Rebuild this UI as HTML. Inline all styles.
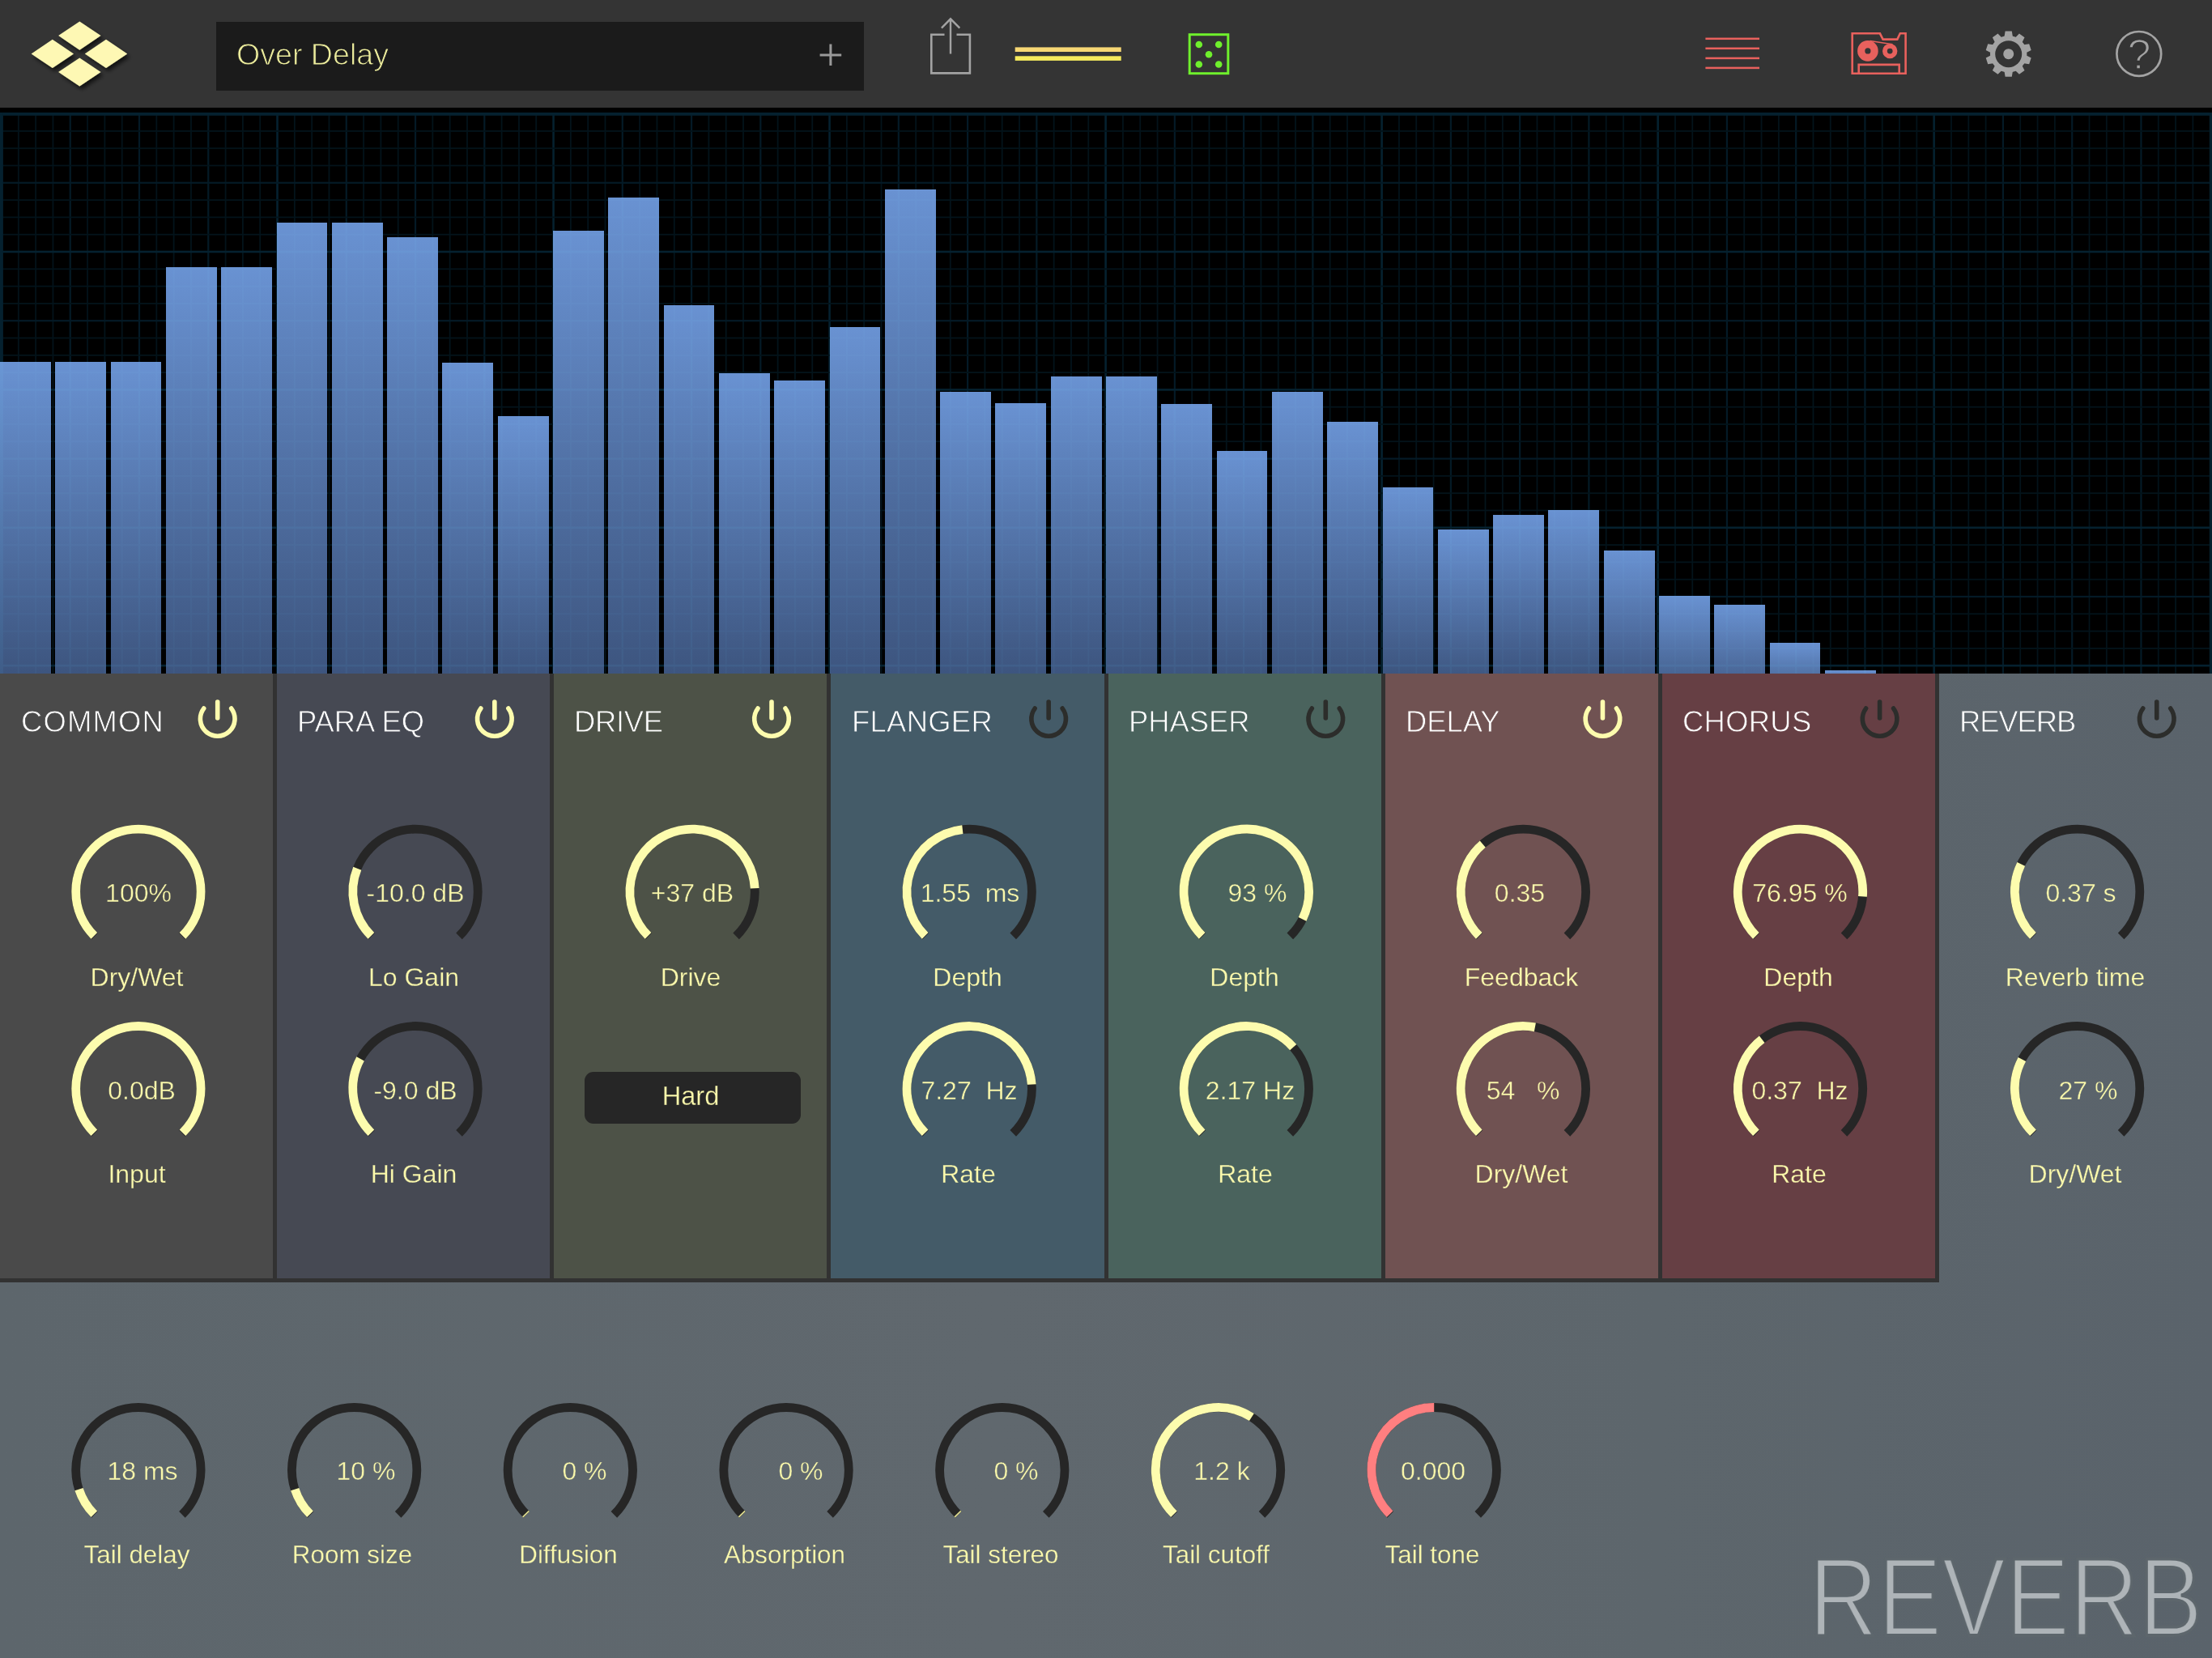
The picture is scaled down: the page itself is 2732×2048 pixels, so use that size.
<!DOCTYPE html>
<html lang="en"><head><meta charset="utf-8"><title>Reverb FX</title>
<style>
html,body{margin:0;padding:0;background:#5d666c;}
body{width:2732px;height:2048px;position:relative;overflow:hidden;font-family:"Liberation Sans", sans-serif;}
.t{position:absolute;line-height:0;white-space:pre;margin:0;padding:0;will-change:transform;}
.abs{position:absolute;}
svg{position:absolute;left:0;top:0;overflow:visible;}
.k path{fill:none;stroke-width:10.8;}

</style></head><body>
<header class="abs" style="left:0;top:0;width:2732px;height:133px;background:#343434;"></header>
<div class="abs" style="left:0;top:133px;width:2732px;height:6px;background:#000;"></div>
<svg width="200" height="133" viewBox="0 0 200 133"><defs><filter id="ds" x="-30%" y="-30%" width="170%" height="170%"><feGaussianBlur in="SourceAlpha" stdDeviation="2.4"/><feOffset dx="3" dy="4"/><feComponentTransfer><feFuncA type="linear" slope="0.65"/></feComponentTransfer><feMerge><feMergeNode/><feMergeNode in="SourceGraphic"/></feMerge></filter></defs><g filter="url(#ds)" fill="#fef8b4">
<path d="M98.3 26.5 L124.5 44.1 L98.3 61.7 L72.1 44.1Z"/>
<path d="M64.8 48.8 L91 66.4 L64.8 84 L38.6 66.4Z"/>
<path d="M131 48.8 L157.2 66.4 L131 84 L104.8 66.4Z"/>
<path d="M98.3 71.4 L124.5 89 L98.3 106.6 L72.1 89Z"/>
</g></svg>
<div class="abs" style="left:267px;top:27px;width:800px;height:85px;background:#1b1b1b;"></div>
<div class="t" style="left:291.6px;top:66.77px;font-size:37.6px;color:#eded9d;-webkit-text-stroke:1px #1b1b1b;">Over Delay</div>
<svg width="2732" height="133" viewBox="0 0 2732 133">
<path d="M1012.6 67.9H1039.2M1025.9 54.5V81.1" stroke="#999999" stroke-width="3" fill="none"/>
<path d="M1166.5 42.8H1150.3V90.4H1197.9V42.8H1181.5" stroke="#a3a3a3" stroke-width="2.6" fill="none"/>
<path d="M1174 66.5V23.5M1162.9 34.6L1174 23.3L1185.3 34.6" stroke="#a3a3a3" stroke-width="2.4" fill="none"/>
<rect x="1253.7" y="58.4" width="131" height="5.6" fill="#f7d774"/>
<rect x="1253.7" y="69.3" width="131" height="5.6" fill="#f6ea5c"/>
<rect x="1469.2" y="42.7" width="47.6" height="48" stroke="#6ff02c" stroke-width="3" fill="none"/>
<circle cx="1480.8" cy="55" r="4.3" fill="#6ff02c"/>
<circle cx="1505.2" cy="55" r="4.3" fill="#6ff02c"/>
<circle cx="1493" cy="67.2" r="4.3" fill="#6ff02c"/>
<circle cx="1480.8" cy="79.5" r="4.3" fill="#6ff02c"/>
<circle cx="1505.2" cy="79.5" r="4.3" fill="#6ff02c"/>
<rect x="2106.4" y="46.55" width="66.6" height="2.5" fill="#e8615d"/>
<rect x="2106.4" y="58.55" width="66.6" height="2.5" fill="#e8615d"/>
<rect x="2106.4" y="70.65" width="66.6" height="2.5" fill="#e8615d"/>
<rect x="2106.4" y="82.65" width="66.6" height="2.5" fill="#e8615d"/>
<path d="M2287.7 41.3H2321.9L2325.6 48.6H2343.3L2346.8 41.3H2353.6V90.8H2287.7Z" stroke="#e8615d" stroke-width="2.6" fill="none"/>
<path d="M2295.7 90.8V79.9H2345.7V90.8" stroke="#e8615d" stroke-width="2.6" fill="none"/>
<circle cx="2306.9" cy="62.9" r="8.2" stroke="#e8615d" stroke-width="9.2" fill="none"/>
<circle cx="2334.2" cy="63.1" r="6.3" stroke="#e8615d" stroke-width="5.8" fill="none"/>
<path d="M2309.5 50.6L2337.5 54.8" stroke="#e8615d" stroke-width="1.5" fill="none"/>
<path d="M2475.55 45.11 L2476.61 38.6 L2484.79 38.6 L2485.85 45.11 L2489.22 46.2 L2493.91 41.56 L2500.52 46.36 L2497.56 52.26 L2499.64 55.13 L2506.17 54.13 L2508.69 61.9 L2502.83 64.93 L2502.83 68.47 L2508.69 71.5 L2506.17 79.27 L2499.64 78.27 L2497.56 81.14 L2500.52 87.04 L2493.91 91.84 L2489.22 87.2 L2485.85 88.29 L2484.79 94.8 L2476.61 94.8 L2475.55 88.29 L2472.18 87.2 L2467.49 91.84 L2460.88 87.04 L2463.84 81.14 L2461.76 78.27 L2455.23 79.27 L2452.71 71.5 L2458.57 68.47 L2458.57 64.93 L2452.71 61.9 L2455.23 54.13 L2461.76 55.13 L2463.84 52.26 L2460.88 46.36 L2467.49 41.56 L2472.18 46.2Z" fill="#a3a3a3"/>
<circle cx="2480.7" cy="66.7" r="19.6" stroke="#a3a3a3" stroke-width="6.2" fill="none"/>
<circle cx="2480.7" cy="66.7" r="16.5" fill="#343434"/>
<circle cx="2480.7" cy="66.7" r="6.5" fill="#a3a3a3"/>
<circle cx="2641.8" cy="66.4" r="27.4" stroke="#a3a3a3" stroke-width="2.7" fill="none"/>
</svg>
<div class="t" style="left:2641.8px;top:67.38px;font-size:52px;color:#a3a3a3;transform:translateX(-50%);-webkit-text-stroke:1.5px #343434;">?</div>
<section class="abs" style="left:0;top:139px;width:2732px;height:693px;background:#000;overflow:hidden;">
<svg width="2732" height="693" viewBox="0 0 2732 693"><defs><g id="grid">
<rect x="21.91" y="0" width="1.8" height="693" fill="#03131b"/>
<rect x="43.23" y="0" width="1.8" height="693" fill="#03131b"/>
<rect x="64.54" y="0" width="1.8" height="693" fill="#03131b"/>
<rect x="85.66" y="0" width="2.2" height="693" fill="#041b27"/>
<rect x="107.17" y="0" width="1.8" height="693" fill="#03131b"/>
<rect x="128.48" y="0" width="1.8" height="693" fill="#03131b"/>
<rect x="149.8" y="0" width="1.8" height="693" fill="#03131b"/>
<rect x="170.91" y="0" width="2.2" height="693" fill="#041b27"/>
<rect x="192.43" y="0" width="1.8" height="693" fill="#03131b"/>
<rect x="213.74" y="0" width="1.8" height="693" fill="#03131b"/>
<rect x="235.05" y="0" width="1.8" height="693" fill="#03131b"/>
<rect x="256.17" y="0" width="2.2" height="693" fill="#041b27"/>
<rect x="277.68" y="0" width="1.8" height="693" fill="#03131b"/>
<rect x="299" y="0" width="1.8" height="693" fill="#03131b"/>
<rect x="320.31" y="0" width="1.8" height="693" fill="#03131b"/>
<rect x="341.22" y="0" width="2.6" height="693" fill="#052231"/>
<rect x="362.94" y="0" width="1.8" height="693" fill="#03131b"/>
<rect x="384.25" y="0" width="1.8" height="693" fill="#03131b"/>
<rect x="405.57" y="0" width="1.8" height="693" fill="#03131b"/>
<rect x="426.68" y="0" width="2.2" height="693" fill="#041b27"/>
<rect x="448.19" y="0" width="1.8" height="693" fill="#03131b"/>
<rect x="469.51" y="0" width="1.8" height="693" fill="#03131b"/>
<rect x="490.82" y="0" width="1.8" height="693" fill="#03131b"/>
<rect x="511.94" y="0" width="2.2" height="693" fill="#041b27"/>
<rect x="533.45" y="0" width="1.8" height="693" fill="#03131b"/>
<rect x="554.76" y="0" width="1.8" height="693" fill="#03131b"/>
<rect x="576.08" y="0" width="1.8" height="693" fill="#03131b"/>
<rect x="597.19" y="0" width="2.2" height="693" fill="#041b27"/>
<rect x="618.71" y="0" width="1.8" height="693" fill="#03131b"/>
<rect x="640.02" y="0" width="1.8" height="693" fill="#03131b"/>
<rect x="661.33" y="0" width="1.8" height="693" fill="#03131b"/>
<rect x="682.25" y="0" width="2.6" height="693" fill="#052231"/>
<rect x="703.96" y="0" width="1.8" height="693" fill="#03131b"/>
<rect x="725.28" y="0" width="1.8" height="693" fill="#03131b"/>
<rect x="746.59" y="0" width="1.8" height="693" fill="#03131b"/>
<rect x="767.7" y="0" width="2.2" height="693" fill="#041b27"/>
<rect x="789.22" y="0" width="1.8" height="693" fill="#03131b"/>
<rect x="810.53" y="0" width="1.8" height="693" fill="#03131b"/>
<rect x="831.85" y="0" width="1.8" height="693" fill="#03131b"/>
<rect x="852.96" y="0" width="2.2" height="693" fill="#041b27"/>
<rect x="874.47" y="0" width="1.8" height="693" fill="#03131b"/>
<rect x="895.79" y="0" width="1.8" height="693" fill="#03131b"/>
<rect x="917.1" y="0" width="1.8" height="693" fill="#03131b"/>
<rect x="938.22" y="0" width="2.2" height="693" fill="#041b27"/>
<rect x="959.73" y="0" width="1.8" height="693" fill="#03131b"/>
<rect x="981.04" y="0" width="1.8" height="693" fill="#03131b"/>
<rect x="1002.36" y="0" width="1.8" height="693" fill="#03131b"/>
<rect x="1023.27" y="0" width="2.6" height="693" fill="#052231"/>
<rect x="1044.99" y="0" width="1.8" height="693" fill="#03131b"/>
<rect x="1066.3" y="0" width="1.8" height="693" fill="#03131b"/>
<rect x="1087.61" y="0" width="1.8" height="693" fill="#03131b"/>
<rect x="1108.73" y="0" width="2.2" height="693" fill="#041b27"/>
<rect x="1130.24" y="0" width="1.8" height="693" fill="#03131b"/>
<rect x="1151.56" y="0" width="1.8" height="693" fill="#03131b"/>
<rect x="1172.87" y="0" width="1.8" height="693" fill="#03131b"/>
<rect x="1193.98" y="0" width="2.2" height="693" fill="#041b27"/>
<rect x="1215.5" y="0" width="1.8" height="693" fill="#03131b"/>
<rect x="1236.81" y="0" width="1.8" height="693" fill="#03131b"/>
<rect x="1258.13" y="0" width="1.8" height="693" fill="#03131b"/>
<rect x="1279.24" y="0" width="2.2" height="693" fill="#041b27"/>
<rect x="1300.75" y="0" width="1.8" height="693" fill="#03131b"/>
<rect x="1322.07" y="0" width="1.8" height="693" fill="#03131b"/>
<rect x="1343.38" y="0" width="1.8" height="693" fill="#03131b"/>
<rect x="1364.3" y="0" width="2.6" height="693" fill="#052231"/>
<rect x="1386.01" y="0" width="1.8" height="693" fill="#03131b"/>
<rect x="1407.32" y="0" width="1.8" height="693" fill="#03131b"/>
<rect x="1428.64" y="0" width="1.8" height="693" fill="#03131b"/>
<rect x="1449.75" y="0" width="2.2" height="693" fill="#041b27"/>
<rect x="1471.27" y="0" width="1.8" height="693" fill="#03131b"/>
<rect x="1492.58" y="0" width="1.8" height="693" fill="#03131b"/>
<rect x="1513.89" y="0" width="1.8" height="693" fill="#03131b"/>
<rect x="1535.01" y="0" width="2.2" height="693" fill="#041b27"/>
<rect x="1556.52" y="0" width="1.8" height="693" fill="#03131b"/>
<rect x="1577.84" y="0" width="1.8" height="693" fill="#03131b"/>
<rect x="1599.15" y="0" width="1.8" height="693" fill="#03131b"/>
<rect x="1620.26" y="0" width="2.2" height="693" fill="#041b27"/>
<rect x="1641.78" y="0" width="1.8" height="693" fill="#03131b"/>
<rect x="1663.09" y="0" width="1.8" height="693" fill="#03131b"/>
<rect x="1684.41" y="0" width="1.8" height="693" fill="#03131b"/>
<rect x="1705.32" y="0" width="2.6" height="693" fill="#052231"/>
<rect x="1727.03" y="0" width="1.8" height="693" fill="#03131b"/>
<rect x="1748.35" y="0" width="1.8" height="693" fill="#03131b"/>
<rect x="1769.66" y="0" width="1.8" height="693" fill="#03131b"/>
<rect x="1790.78" y="0" width="2.2" height="693" fill="#041b27"/>
<rect x="1812.29" y="0" width="1.8" height="693" fill="#03131b"/>
<rect x="1833.6" y="0" width="1.8" height="693" fill="#03131b"/>
<rect x="1854.92" y="0" width="1.8" height="693" fill="#03131b"/>
<rect x="1876.03" y="0" width="2.2" height="693" fill="#041b27"/>
<rect x="1897.55" y="0" width="1.8" height="693" fill="#03131b"/>
<rect x="1918.86" y="0" width="1.8" height="693" fill="#03131b"/>
<rect x="1940.17" y="0" width="1.8" height="693" fill="#03131b"/>
<rect x="1961.29" y="0" width="2.2" height="693" fill="#041b27"/>
<rect x="1982.8" y="0" width="1.8" height="693" fill="#03131b"/>
<rect x="2004.12" y="0" width="1.8" height="693" fill="#03131b"/>
<rect x="2025.43" y="0" width="1.8" height="693" fill="#03131b"/>
<rect x="2046.34" y="0" width="2.6" height="693" fill="#052231"/>
<rect x="2068.06" y="0" width="1.8" height="693" fill="#03131b"/>
<rect x="2089.37" y="0" width="1.8" height="693" fill="#03131b"/>
<rect x="2110.69" y="0" width="1.8" height="693" fill="#03131b"/>
<rect x="2131.8" y="0" width="2.2" height="693" fill="#041b27"/>
<rect x="2153.31" y="0" width="1.8" height="693" fill="#03131b"/>
<rect x="2174.63" y="0" width="1.8" height="693" fill="#03131b"/>
<rect x="2195.94" y="0" width="1.8" height="693" fill="#03131b"/>
<rect x="2217.06" y="0" width="2.2" height="693" fill="#041b27"/>
<rect x="2238.57" y="0" width="1.8" height="693" fill="#03131b"/>
<rect x="2259.88" y="0" width="1.8" height="693" fill="#03131b"/>
<rect x="2281.2" y="0" width="1.8" height="693" fill="#03131b"/>
<rect x="2302.31" y="0" width="2.2" height="693" fill="#041b27"/>
<rect x="2323.83" y="0" width="1.8" height="693" fill="#03131b"/>
<rect x="2345.14" y="0" width="1.8" height="693" fill="#03131b"/>
<rect x="2366.45" y="0" width="1.8" height="693" fill="#03131b"/>
<rect x="2387.37" y="0" width="2.6" height="693" fill="#052231"/>
<rect x="2409.08" y="0" width="1.8" height="693" fill="#03131b"/>
<rect x="2430.4" y="0" width="1.8" height="693" fill="#03131b"/>
<rect x="2451.71" y="0" width="1.8" height="693" fill="#03131b"/>
<rect x="2472.82" y="0" width="2.2" height="693" fill="#041b27"/>
<rect x="2494.34" y="0" width="1.8" height="693" fill="#03131b"/>
<rect x="2515.65" y="0" width="1.8" height="693" fill="#03131b"/>
<rect x="2536.97" y="0" width="1.8" height="693" fill="#03131b"/>
<rect x="2558.08" y="0" width="2.2" height="693" fill="#041b27"/>
<rect x="2579.59" y="0" width="1.8" height="693" fill="#03131b"/>
<rect x="2600.91" y="0" width="1.8" height="693" fill="#03131b"/>
<rect x="2622.22" y="0" width="1.8" height="693" fill="#03131b"/>
<rect x="2643.34" y="0" width="2.2" height="693" fill="#041b27"/>
<rect x="2664.85" y="0" width="1.8" height="693" fill="#03131b"/>
<rect x="2686.16" y="0" width="1.8" height="693" fill="#03131b"/>
<rect x="2707.48" y="0" width="1.8" height="693" fill="#03131b"/>
<rect x="0" y="22" width="2732" height="1.8" fill="#03131b"/>
<rect x="0" y="43.3" width="2732" height="1.8" fill="#03131b"/>
<rect x="0" y="64.6" width="2732" height="1.8" fill="#03131b"/>
<rect x="0" y="85.7" width="2732" height="2.2" fill="#041b27"/>
<rect x="0" y="107.2" width="2732" height="1.8" fill="#03131b"/>
<rect x="0" y="128.5" width="2732" height="1.8" fill="#03131b"/>
<rect x="0" y="149.8" width="2732" height="1.8" fill="#03131b"/>
<rect x="0" y="170.7" width="2732" height="2.6" fill="#052231"/>
<rect x="0" y="192.4" width="2732" height="1.8" fill="#03131b"/>
<rect x="0" y="213.7" width="2732" height="1.8" fill="#03131b"/>
<rect x="0" y="235" width="2732" height="1.8" fill="#03131b"/>
<rect x="0" y="256.1" width="2732" height="2.2" fill="#041b27"/>
<rect x="0" y="277.6" width="2732" height="1.8" fill="#03131b"/>
<rect x="0" y="298.9" width="2732" height="1.8" fill="#03131b"/>
<rect x="0" y="320.2" width="2732" height="1.8" fill="#03131b"/>
<rect x="0" y="341.1" width="2732" height="2.6" fill="#052231"/>
<rect x="0" y="362.8" width="2732" height="1.8" fill="#03131b"/>
<rect x="0" y="384.1" width="2732" height="1.8" fill="#03131b"/>
<rect x="0" y="405.4" width="2732" height="1.8" fill="#03131b"/>
<rect x="0" y="426.5" width="2732" height="2.2" fill="#041b27"/>
<rect x="0" y="448" width="2732" height="1.8" fill="#03131b"/>
<rect x="0" y="469.3" width="2732" height="1.8" fill="#03131b"/>
<rect x="0" y="490.6" width="2732" height="1.8" fill="#03131b"/>
<rect x="0" y="511.5" width="2732" height="2.6" fill="#052231"/>
<rect x="0" y="533.2" width="2732" height="1.8" fill="#03131b"/>
<rect x="0" y="554.5" width="2732" height="1.8" fill="#03131b"/>
<rect x="0" y="575.8" width="2732" height="1.8" fill="#03131b"/>
<rect x="0" y="596.9" width="2732" height="2.2" fill="#041b27"/>
<rect x="0" y="618.4" width="2732" height="1.8" fill="#03131b"/>
<rect x="0" y="639.7" width="2732" height="1.8" fill="#03131b"/>
<rect x="0" y="661" width="2732" height="1.8" fill="#03131b"/>
<rect x="0" y="681.9" width="2732" height="2.6" fill="#052231"/>
<rect x="0" y="0" width="2732" height="3.8" fill="#052231"/>
<rect x="0" y="0" width="3.9" height="693" fill="#052231"/>
<rect x="2728.8" y="0" width="3.2" height="693" fill="#052231"/>
</g></defs><use href="#grid" opacity="0.65"/></svg>
<i class="abs" style="left:0px;top:307.8px;width:62.9px;height:385.2px;background:linear-gradient(#6992d2,#3d557f);"></i>
<i class="abs" style="left:68.3px;top:307.8px;width:62.9px;height:385.2px;background:linear-gradient(#6992d2,#3d557f);"></i>
<i class="abs" style="left:136.6px;top:307.8px;width:62.9px;height:385.2px;background:linear-gradient(#6992d2,#3d557f);"></i>
<i class="abs" style="left:204.9px;top:191.4px;width:62.9px;height:501.6px;background:linear-gradient(#6992d2,#3d557f);"></i>
<i class="abs" style="left:273.2px;top:191.4px;width:62.9px;height:501.6px;background:linear-gradient(#6992d2,#3d557f);"></i>
<i class="abs" style="left:341.5px;top:136px;width:62.9px;height:557px;background:linear-gradient(#6992d2,#3d557f);"></i>
<i class="abs" style="left:409.8px;top:136px;width:62.9px;height:557px;background:linear-gradient(#6992d2,#3d557f);"></i>
<i class="abs" style="left:478.1px;top:154px;width:62.9px;height:539px;background:linear-gradient(#6992d2,#3d557f);"></i>
<i class="abs" style="left:546.4px;top:308.8px;width:62.9px;height:384.2px;background:linear-gradient(#6992d2,#3d557f);"></i>
<i class="abs" style="left:614.7px;top:375.2px;width:62.9px;height:317.8px;background:linear-gradient(#6992d2,#3d557f);"></i>
<i class="abs" style="left:683px;top:145.8px;width:62.9px;height:547.2px;background:linear-gradient(#6992d2,#3d557f);"></i>
<i class="abs" style="left:751.3px;top:105.3px;width:62.9px;height:587.7px;background:linear-gradient(#6992d2,#3d557f);"></i>
<i class="abs" style="left:819.6px;top:238.2px;width:62.9px;height:454.8px;background:linear-gradient(#6992d2,#3d557f);"></i>
<i class="abs" style="left:887.9px;top:322px;width:62.9px;height:371px;background:linear-gradient(#6992d2,#3d557f);"></i>
<i class="abs" style="left:956.2px;top:331px;width:62.9px;height:362px;background:linear-gradient(#6992d2,#3d557f);"></i>
<i class="abs" style="left:1024.5px;top:265.1px;width:62.9px;height:427.9px;background:linear-gradient(#6992d2,#3d557f);"></i>
<i class="abs" style="left:1092.8px;top:94.9px;width:62.9px;height:598.1px;background:linear-gradient(#6992d2,#3d557f);"></i>
<i class="abs" style="left:1161.1px;top:345.2px;width:62.9px;height:347.8px;background:linear-gradient(#6992d2,#3d557f);"></i>
<i class="abs" style="left:1229.4px;top:358.8px;width:62.9px;height:334.2px;background:linear-gradient(#6992d2,#3d557f);"></i>
<i class="abs" style="left:1297.7px;top:325.6px;width:62.9px;height:367.4px;background:linear-gradient(#6992d2,#3d557f);"></i>
<i class="abs" style="left:1366px;top:326.3px;width:62.9px;height:366.7px;background:linear-gradient(#6992d2,#3d557f);"></i>
<i class="abs" style="left:1434.3px;top:360.2px;width:62.9px;height:332.8px;background:linear-gradient(#6992d2,#3d557f);"></i>
<i class="abs" style="left:1502.6px;top:418.1px;width:62.9px;height:274.9px;background:linear-gradient(#6992d2,#3d557f);"></i>
<i class="abs" style="left:1570.9px;top:345px;width:62.9px;height:348px;background:linear-gradient(#6992d2,#3d557f);"></i>
<i class="abs" style="left:1639.2px;top:381.7px;width:62.9px;height:311.3px;background:linear-gradient(#6992d2,#3d557f);"></i>
<i class="abs" style="left:1707.5px;top:463px;width:62.9px;height:230px;background:linear-gradient(#6992d2,#3d557f);"></i>
<i class="abs" style="left:1775.8px;top:514.6px;width:62.9px;height:178.4px;background:linear-gradient(#6992d2,#3f5883);"></i>
<i class="abs" style="left:1844.1px;top:496.6px;width:62.9px;height:196.4px;background:linear-gradient(#6992d2,#3d5580);"></i>
<i class="abs" style="left:1912.4px;top:491.2px;width:62.9px;height:201.8px;background:linear-gradient(#6992d2,#3d557f);"></i>
<i class="abs" style="left:1980.7px;top:541.3px;width:62.9px;height:151.7px;background:linear-gradient(#6992d2,#425b88);"></i>
<i class="abs" style="left:2049px;top:596.9px;width:62.9px;height:96.1px;background:linear-gradient(#6992d2,#486594);"></i>
<i class="abs" style="left:2117.3px;top:607.7px;width:62.9px;height:85.3px;background:linear-gradient(#6992d2,#4a6797);"></i>
<i class="abs" style="left:2185.6px;top:654.9px;width:62.9px;height:38.1px;background:linear-gradient(#6992d2,#5273a7);"></i>
<i class="abs" style="left:2253.9px;top:689px;width:62.9px;height:4px;background:linear-gradient(#6992d2,#6085c1);"></i>
<svg width="2732" height="693" viewBox="0 0 2732 693" style="mix-blend-mode:screen;opacity:0.35;"><use href="#grid"/></svg>
</section>
<main class="abs" style="left:0;top:832px;width:2732px;height:1216px;background:linear-gradient(90deg,#5d666c 0%,#60686e 45%,#5d666c 75%,#5a636b 100%);"></main>
<div class="abs" style="left:0;top:832px;width:2395.05px;height:752px;background:#323232;"></div>
<div class="abs" style="left:0px;top:832px;width:337.15px;height:747px;background:#4a4a4a;"></div>
<div class="t" style="left:25.6px;top:892.19px;font-size:36.4px;color:#ffffff;-webkit-text-stroke:0.8px #4a4a4a;letter-spacing:1.2px;">COMMON</div>
<div class="abs" style="left:342.15px;top:832px;width:337.15px;height:747px;background:#464953;"></div>
<div class="t" style="left:367.25px;top:892.19px;font-size:36.4px;color:#ffffff;-webkit-text-stroke:0.8px #464953;">PARA EQ</div>
<div class="abs" style="left:684.3px;top:832px;width:337.15px;height:747px;background:#4d5247;"></div>
<div class="t" style="left:709.4px;top:892.19px;font-size:36.4px;color:#ffffff;-webkit-text-stroke:0.8px #4d5247;letter-spacing:-0.3px;">DRIVE</div>
<div class="abs" style="left:1026.45px;top:832px;width:337.15px;height:747px;background:#445b68;"></div>
<div class="t" style="left:1051.55px;top:892.19px;font-size:36.4px;color:#ffffff;-webkit-text-stroke:0.8px #445b68;letter-spacing:0.3px;">FLANGER</div>
<div class="abs" style="left:1368.6px;top:832px;width:337.15px;height:747px;background:#4a635d;"></div>
<div class="t" style="left:1393.7px;top:892.19px;font-size:36.4px;color:#ffffff;-webkit-text-stroke:0.8px #4a635d;">PHASER</div>
<div class="abs" style="left:1710.75px;top:832px;width:337.15px;height:747px;background:#705252;"></div>
<div class="t" style="left:1735.85px;top:892.19px;font-size:36.4px;color:#ffffff;-webkit-text-stroke:0.8px #705252;">DELAY</div>
<div class="abs" style="left:2052.9px;top:832px;width:337.15px;height:747px;background:#663f44;"></div>
<div class="t" style="left:2078px;top:892.19px;font-size:36.4px;color:#ffffff;-webkit-text-stroke:0.8px #663f44;letter-spacing:0.3px;">CHORUS</div>
<div class="t" style="left:2420.15px;top:892.19px;font-size:36.4px;color:#ffffff;-webkit-text-stroke:0.8px #5d666c;letter-spacing:-1.1px;">REVERB</div>
<svg width="2732" height="2048" viewBox="0 0 2732 2048" fill="none" stroke-linecap="round">
<path d="M285.71 875.08 A21.3 21.3 0 1 1 251.69 875.08 M268.7 867V887" stroke="#fdfcae" stroke-width="5.6"/>
<path d="M627.86 875.08 A21.3 21.3 0 1 1 593.84 875.08 M610.85 867V887" stroke="#fdfcae" stroke-width="5.6"/>
<path d="M970.01 875.08 A21.3 21.3 0 1 1 935.99 875.08 M953 867V887" stroke="#fdfcae" stroke-width="5.6"/>
<path d="M1312.16 875.08 A21.3 21.3 0 1 1 1278.14 875.08 M1295.15 867V887" stroke="#2c2d2b" stroke-width="5.6"/>
<path d="M1654.31 875.08 A21.3 21.3 0 1 1 1620.29 875.08 M1637.3 867V887" stroke="#2c2d2b" stroke-width="5.6"/>
<path d="M1996.46 875.08 A21.3 21.3 0 1 1 1962.44 875.08 M1979.45 867V887" stroke="#fdfcae" stroke-width="5.6"/>
<path d="M2338.61 875.08 A21.3 21.3 0 1 1 2304.59 875.08 M2321.6 867V887" stroke="#2c2d2b" stroke-width="5.6"/>
<path d="M2680.76 875.08 A21.3 21.3 0 1 1 2646.74 875.08 M2663.75 867V887" stroke="#2c2d2b" stroke-width="5.6"/>
</svg>
<svg class="k" width="2732" height="2048" viewBox="0 0 2732 2048">
<path d="M116.89 1156.46 A77.2 77.2 0 1 1 224.91 1156.46" stroke="#262626"/><path d="M116.31 1155.89 A77.2 77.2 0 1 1 225.49 1155.89" stroke="#fdfcae"/>
<path d="M116.89 1399.86 A77.2 77.2 0 1 1 224.91 1399.86" stroke="#262626"/><path d="M116.31 1399.29 A77.2 77.2 0 1 1 225.49 1399.29" stroke="#fdfcae"/>
<path d="M458.99 1156.46 A77.2 77.2 0 1 1 567.01 1156.46" stroke="#262626"/><path d="M458.41 1155.89 A77.2 77.2 0 0 1 441.27 1072.77" stroke="#fdfcae"/>
<path d="M458.99 1399.86 A77.2 77.2 0 1 1 567.01 1399.86" stroke="#262626"/><path d="M458.41 1399.29 A77.2 77.2 0 0 1 445.12 1307.93" stroke="#fdfcae"/>
<path d="M801.09 1156.46 A77.2 77.2 0 1 1 909.11 1156.46" stroke="#262626"/><path d="M800.51 1155.89 A77.2 77.2 0 1 1 932.19 1097.18" stroke="#fdfcae"/>
<path d="M1143.19 1156.46 A77.2 77.2 0 1 1 1251.21 1156.46" stroke="#262626"/><path d="M1142.61 1155.89 A77.2 77.2 0 0 1 1188.85 1024.55" stroke="#fdfcae"/>
<path d="M1143.19 1399.86 A77.2 77.2 0 1 1 1251.21 1399.86" stroke="#262626"/><path d="M1142.61 1399.29 A77.2 77.2 0 1 1 1274.22 1339.49" stroke="#fdfcae"/>
<path d="M1485.29 1156.46 A77.2 77.2 0 1 1 1593.31 1156.46" stroke="#262626"/><path d="M1484.71 1155.89 A77.2 77.2 0 1 1 1608.63 1135.26" stroke="#fdfcae"/>
<path d="M1485.29 1399.86 A77.2 77.2 0 1 1 1593.31 1399.86" stroke="#262626"/><path d="M1484.71 1399.29 A77.2 77.2 0 1 1 1597.21 1293.65" stroke="#fdfcae"/>
<path d="M1827.39 1156.46 A77.2 77.2 0 1 1 1935.41 1156.46" stroke="#262626"/><path d="M1826.81 1155.89 A77.2 77.2 0 0 1 1831.26 1042.6" stroke="#fdfcae"/>
<path d="M1827.39 1399.86 A77.2 77.2 0 1 1 1935.41 1399.86" stroke="#262626"/><path d="M1826.81 1399.29 A77.2 77.2 0 0 1 1895.87 1268.87" stroke="#fdfcae"/>
<path d="M2169.49 1156.46 A77.2 77.2 0 1 1 2277.51 1156.46" stroke="#262626"/><path d="M2168.91 1155.89 A77.2 77.2 0 1 1 2300.46 1107.36" stroke="#fdfcae"/>
<path d="M2169.49 1399.86 A77.2 77.2 0 1 1 2277.51 1399.86" stroke="#262626"/><path d="M2168.91 1399.29 A77.2 77.2 0 0 1 2176.18 1283.7" stroke="#fdfcae"/>
<path d="M2511.59 1156.46 A77.2 77.2 0 1 1 2619.61 1156.46" stroke="#262626"/><path d="M2511.01 1155.89 A77.2 77.2 0 0 1 2496.22 1067.45" stroke="#fdfcae"/>
<path d="M2511.59 1399.86 A77.2 77.2 0 1 1 2619.61 1399.86" stroke="#262626"/><path d="M2511.01 1399.29 A77.2 77.2 0 0 1 2497.37 1308.58" stroke="#fdfcae"/>
<path d="M116.89 1870.86 A77.2 77.2 0 1 1 224.91 1870.86" stroke="#262626"/><path d="M116.31 1870.29 A77.2 77.2 0 0 1 97.48 1839.56" stroke="#fdfcae"/>
<path d="M383.61 1870.86 A77.2 77.2 0 1 1 491.63 1870.86" stroke="#262626"/><path d="M383.03 1870.29 A77.2 77.2 0 0 1 364.2 1839.56" stroke="#fdfcae"/>
<path d="M650.33 1870.86 A77.2 77.2 0 1 1 758.35 1870.86" stroke="#262626"/><path d="M650.23 1870.76 A77.2 77.2 0 0 1 648.9 1869.42" stroke="#dcda8e"/>
<path d="M917.05 1870.86 A77.2 77.2 0 1 1 1025.07 1870.86" stroke="#262626"/><path d="M916.95 1870.76 A77.2 77.2 0 0 1 915.62 1869.42" stroke="#dcda8e"/>
<path d="M1183.77 1870.86 A77.2 77.2 0 1 1 1291.79 1870.86" stroke="#262626"/><path d="M1183.67 1870.76 A77.2 77.2 0 0 1 1182.34 1869.42" stroke="#dcda8e"/>
<path d="M1450.49 1870.86 A77.2 77.2 0 1 1 1558.51 1870.86" stroke="#262626"/><path d="M1449.91 1870.29 A77.2 77.2 0 0 1 1545.87 1750.52" stroke="#fdfcae"/>
<path d="M1717.21 1870.86 A77.2 77.2 0 1 1 1825.23 1870.86" stroke="#262626"/><path d="M1716.63 1870.29 A77.2 77.2 0 0 1 1771.22 1738.5" stroke="#ff7f80"/>
</svg>
<div class="t" style="left:171.3px;top:1103.41px;font-size:32px;color:#faf8ab;transform:translateX(-50%);-webkit-text-stroke:0.4px #4a4a4a;">100%</div>
<div class="t" style="left:168.5px;top:1206.91px;font-size:32px;color:#fbf9ac;transform:translateX(-50%);-webkit-text-stroke:0.3px #4a4a4a;">Dry/Wet</div>
<div class="t" style="left:174.5px;top:1346.81px;font-size:32px;color:#faf8ab;transform:translateX(-50%);-webkit-text-stroke:0.4px #4a4a4a;">0.0dB</div>
<div class="t" style="left:168.5px;top:1450.31px;font-size:32px;color:#fbf9ac;transform:translateX(-50%);-webkit-text-stroke:0.3px #4a4a4a;">Input</div>
<div class="t" style="left:512.6px;top:1103.41px;font-size:32px;color:#faf8ab;transform:translateX(-50%);-webkit-text-stroke:0.4px #464953;">-10.0 dB</div>
<div class="t" style="left:510.6px;top:1206.91px;font-size:32px;color:#fbf9ac;transform:translateX(-50%);-webkit-text-stroke:0.3px #464953;">Lo Gain</div>
<div class="t" style="left:513px;top:1346.81px;font-size:32px;color:#faf8ab;transform:translateX(-50%);-webkit-text-stroke:0.4px #464953;">-9.0 dB</div>
<div class="t" style="left:510.6px;top:1450.31px;font-size:32px;color:#fbf9ac;transform:translateX(-50%);-webkit-text-stroke:0.3px #464953;">Hi Gain</div>
<div class="t" style="left:855.1px;top:1103.41px;font-size:32px;color:#faf8ab;transform:translateX(-50%);-webkit-text-stroke:0.4px #4d5247;">+37 dB</div>
<div class="t" style="left:852.7px;top:1206.91px;font-size:32px;color:#fbf9ac;transform:translateX(-50%);-webkit-text-stroke:0.3px #4d5247;">Drive</div>
<div class="t" style="left:1197.5px;top:1103.41px;font-size:32px;color:#faf8ab;transform:translateX(-50%);-webkit-text-stroke:0.4px #445b68;">1.55  ms</div>
<div class="t" style="left:1194.8px;top:1206.91px;font-size:32px;color:#fbf9ac;transform:translateX(-50%);-webkit-text-stroke:0.3px #445b68;">Depth</div>
<div class="t" style="left:1197.2px;top:1346.81px;font-size:32px;color:#faf8ab;transform:translateX(-50%);-webkit-text-stroke:0.4px #445b68;">7.27  Hz</div>
<div class="t" style="left:1196px;top:1450.31px;font-size:32px;color:#fbf9ac;transform:translateX(-50%);-webkit-text-stroke:0.3px #445b68;">Rate</div>
<div class="t" style="left:1552.7px;top:1103.41px;font-size:32px;color:#faf8ab;transform:translateX(-50%);-webkit-text-stroke:0.4px #4a635d;">93 %</div>
<div class="t" style="left:1536.9px;top:1206.91px;font-size:32px;color:#fbf9ac;transform:translateX(-50%);-webkit-text-stroke:0.3px #4a635d;">Depth</div>
<div class="t" style="left:1543.5px;top:1346.81px;font-size:32px;color:#faf8ab;transform:translateX(-50%);-webkit-text-stroke:0.4px #4a635d;">2.17 Hz</div>
<div class="t" style="left:1538.1px;top:1450.31px;font-size:32px;color:#fbf9ac;transform:translateX(-50%);-webkit-text-stroke:0.3px #4a635d;">Rate</div>
<div class="t" style="left:1876.6px;top:1103.41px;font-size:32px;color:#faf8ab;transform:translateX(-50%);-webkit-text-stroke:0.4px #705252;">0.35</div>
<div class="t" style="left:1879px;top:1206.91px;font-size:32px;color:#fbf9ac;transform:translateX(-50%);-webkit-text-stroke:0.3px #705252;">Feedback</div>
<div class="t" style="left:1880.8px;top:1346.81px;font-size:32px;color:#faf8ab;transform:translateX(-50%);-webkit-text-stroke:0.4px #705252;">54   %</div>
<div class="t" style="left:1879px;top:1450.31px;font-size:32px;color:#fbf9ac;transform:translateX(-50%);-webkit-text-stroke:0.3px #705252;">Dry/Wet</div>
<div class="t" style="left:2222.8px;top:1103.41px;font-size:32px;color:#faf8ab;transform:translateX(-50%);-webkit-text-stroke:0.4px #663f44;">76.95 %</div>
<div class="t" style="left:2221.1px;top:1206.91px;font-size:32px;color:#fbf9ac;transform:translateX(-50%);-webkit-text-stroke:0.3px #663f44;">Depth</div>
<div class="t" style="left:2223px;top:1346.81px;font-size:32px;color:#faf8ab;transform:translateX(-50%);-webkit-text-stroke:0.4px #663f44;">0.37  Hz</div>
<div class="t" style="left:2222.3px;top:1450.31px;font-size:32px;color:#fbf9ac;transform:translateX(-50%);-webkit-text-stroke:0.3px #663f44;">Rate</div>
<div class="t" style="left:2569.8px;top:1103.41px;font-size:32px;color:#faf8ab;transform:translateX(-50%);-webkit-text-stroke:0.4px #5d666c;">0.37 s</div>
<div class="t" style="left:2563.2px;top:1206.91px;font-size:32px;color:#fbf9ac;transform:translateX(-50%);-webkit-text-stroke:0.3px #5d666c;">Reverb time</div>
<div class="t" style="left:2578.5px;top:1346.81px;font-size:32px;color:#faf8ab;transform:translateX(-50%);-webkit-text-stroke:0.4px #5d666c;">27 %</div>
<div class="t" style="left:2563.2px;top:1450.31px;font-size:32px;color:#fbf9ac;transform:translateX(-50%);-webkit-text-stroke:0.3px #5d666c;">Dry/Wet</div>
<div class="t" style="left:175.9px;top:1817.11px;font-size:32px;color:#faf8ab;transform:translateX(-50%);-webkit-text-stroke:0.4px #5d666c;">18 ms</div>
<div class="t" style="left:168.7px;top:1921.12px;font-size:31.4px;color:#fbf9ac;transform:translateX(-50%);-webkit-text-stroke:0.3px #5d666c;">Tail delay</div>
<div class="t" style="left:451.62px;top:1817.11px;font-size:32px;color:#faf8ab;transform:translateX(-50%);-webkit-text-stroke:0.4px #5d666c;">10 %</div>
<div class="t" style="left:435.42px;top:1921.12px;font-size:31.4px;color:#fbf9ac;transform:translateX(-50%);-webkit-text-stroke:0.3px #5d666c;">Room size</div>
<div class="t" style="left:721.94px;top:1817.11px;font-size:32px;color:#faf8ab;transform:translateX(-50%);-webkit-text-stroke:0.4px #5d666c;">0 %</div>
<div class="t" style="left:702.14px;top:1921.12px;font-size:31.4px;color:#fbf9ac;transform:translateX(-50%);-webkit-text-stroke:0.3px #5d666c;">Diffusion</div>
<div class="t" style="left:988.66px;top:1817.11px;font-size:32px;color:#faf8ab;transform:translateX(-50%);-webkit-text-stroke:0.4px #5d666c;">0 %</div>
<div class="t" style="left:968.86px;top:1921.12px;font-size:31.4px;color:#fbf9ac;transform:translateX(-50%);-webkit-text-stroke:0.3px #5d666c;">Absorption</div>
<div class="t" style="left:1255.38px;top:1817.11px;font-size:32px;color:#faf8ab;transform:translateX(-50%);-webkit-text-stroke:0.4px #5d666c;">0 %</div>
<div class="t" style="left:1235.58px;top:1921.12px;font-size:31.4px;color:#fbf9ac;transform:translateX(-50%);-webkit-text-stroke:0.3px #5d666c;">Tail stereo</div>
<div class="t" style="left:1508.5px;top:1817.11px;font-size:32px;color:#faf8ab;transform:translateX(-50%);-webkit-text-stroke:0.4px #5d666c;">1.2 k</div>
<div class="t" style="left:1502.3px;top:1921.12px;font-size:31.4px;color:#fbf9ac;transform:translateX(-50%);-webkit-text-stroke:0.3px #5d666c;">Tail cutoff</div>
<div class="t" style="left:1770.32px;top:1817.11px;font-size:32px;color:#faf8ab;transform:translateX(-50%);-webkit-text-stroke:0.4px #5d666c;">0.000</div>
<div class="t" style="left:1769.02px;top:1921.12px;font-size:31.4px;color:#fbf9ac;transform:translateX(-50%);-webkit-text-stroke:0.3px #5d666c;">Tail tone</div>
<div class="abs" style="left:722px;top:1324px;width:266.5px;height:64px;border-radius:11px;background:#262626;"></div>
<div class="t" style="left:852.6px;top:1353.9px;font-size:32.6px;color:#fbf9ac;transform:translateX(-50%);-webkit-text-stroke:0.3px #262626;">Hard</div>
<div class="t" style="left:2234px;top:1972.56px;font-size:137.5px;color:#aeb4b8;transform:scaleX(0.86);transform-origin:0 50%;-webkit-text-stroke:3.8px #5d666c;">REVERB</div>
</body></html>
